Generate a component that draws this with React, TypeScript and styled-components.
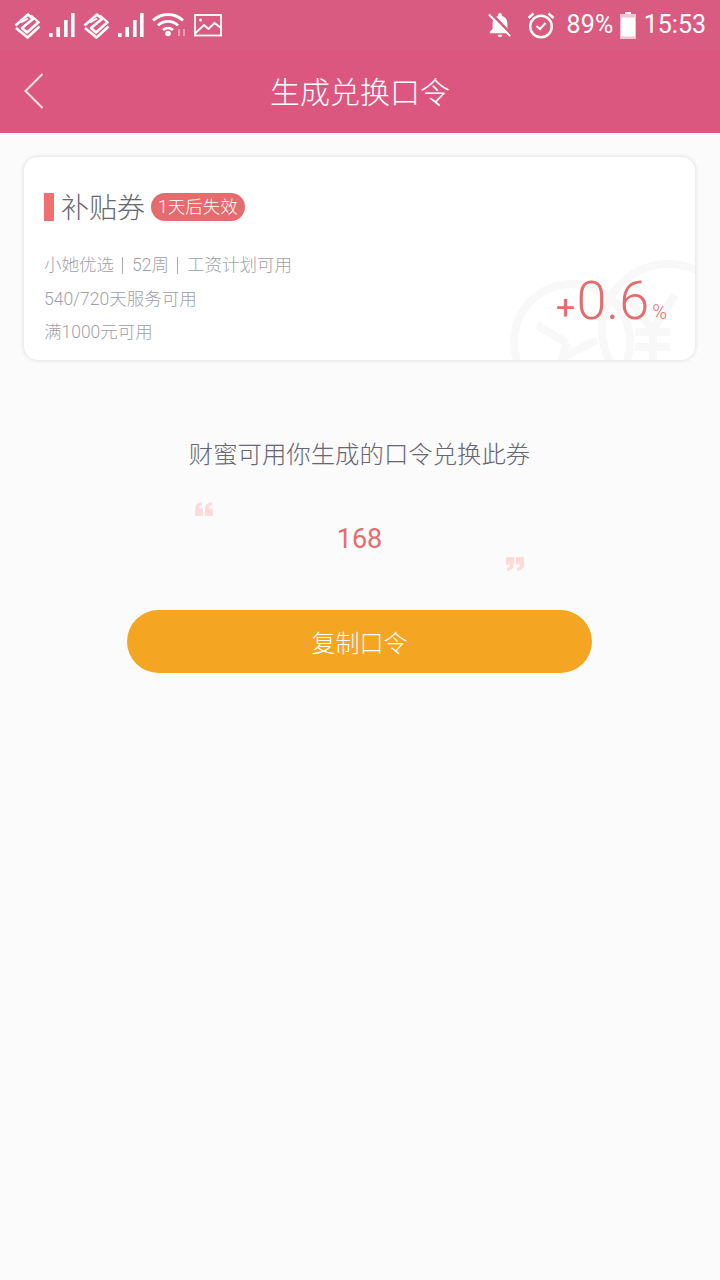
import React from 'react';
import styled, { createGlobalStyle } from 'styled-components';

const Global = createGlobalStyle`
  html, body { margin: 0; padding: 0; background: #fbfbfb; }
  body { font-family: Roboto, "Noto Sans CJK SC", sans-serif; }
`;

const Page = styled.div`
  width: 720px;
  height: 1280px;
  overflow: hidden;
  background: #fbfbfb;
  display: flex;
  flex-direction: column;
`;

const StatusBar = styled.div`
  height: 50px;
  box-sizing: border-box;
  padding: 0 14px;
  background: #d95b81;
  display: flex;
  align-items: center;
  justify-content: space-between;
  color: #fff;
`;

const StatusGroup = styled.div<{ $gap?: number }>`
  display: flex;
  align-items: center;
  gap: ${(p) => p.$gap ?? 0}px;
`;

const StatusSlot = styled.span<{ $left: number }>`
  display: flex;
  align-items: center;
  margin-left: ${(p) => p.$left}px;
`;

const StatusText = styled.span<{ $tight?: boolean }>`
  font-family: Roboto, sans-serif;
  font-size: 25px;
  line-height: 50px;
  letter-spacing: ${(p) => (p.$tight ? '0' : '0.3px')};
  color: #fff;
`;

const Header = styled.div`
  height: 83px;
  background: #dc5780;
  position: relative;
  display: flex;
  align-items: center;
  justify-content: center;
  padding-bottom: 4px;
  box-sizing: border-box;
`;

const BackButton = styled.div`
  position: absolute;
  left: 24px;
  top: 23px;
  line-height: 0;
`;

const Title = styled.h1`
  margin: 0;
  font: 300 30px "Noto Sans CJK SC", sans-serif;
  color: #fff;
`;

const Content = styled.div`
  padding: 24px 25px 0 24px;
  display: flex;
  flex-direction: column;
  align-items: stretch;
`;

const Card = styled.div`
  position: relative;
  overflow: hidden;
  height: 203px;
  box-sizing: border-box;
  padding: 36px 20px 0;
  background: #fff;
  border-radius: 14px;
  box-shadow: 0 0 5px rgba(0, 0, 0, 0.14);
`;

const Watermark = styled.svg`
  position: absolute;
  right: 0;
  bottom: 0;
`;

const CardHead = styled.div`
  display: flex;
  align-items: center;
  height: 28px;
`;

const Marker = styled.span`
  width: 10px;
  height: 28px;
  background: #ee7072;
  margin-right: 7px;
`;

const CardTitle = styled.span`
  position: relative;
  bottom: 1px;
  font: 300 28px/28px "Noto Sans CJK SC", sans-serif;
  color: #666674;
`;

const Badge = styled.span`
  margin-left: 6px;
  height: 28px;
  padding: 0 7px;
  border-radius: 14px;
  background: #e56c6e;
  color: #fff;
  font: 300 17.5px/28px Roboto, "Noto Sans CJK SC", sans-serif;
`;

const Meta = styled.div<{ $top: number }>`
  position: relative;
  margin-top: ${(p) => p.$top}px;
  font: 300 17.5px/24px Roboto, "Noto Sans CJK SC", sans-serif;
  color: #9f9fab;
  display: flex;
  align-items: center;
`;

const Sep = styled.span`
  width: 1px;
  height: 17px;
  background: #a9a9b3;
  margin: 0 9px 0 8px;
`;

const Rate = styled.div`
  position: absolute;
  right: 28px;
  bottom: 23px;
  display: flex;
  align-items: baseline;
  color: #e56c6e;
  font-family: Roboto, sans-serif;
`;

const RatePlus = styled.span`
  font-size: 34px;
  line-height: 50px;
  margin-right: 1px;
`;

const RateValue = styled.span`
  font-size: 54px;
  font-weight: 300;
  line-height: 50px;
`;

const RateUnit = styled.span`
  font-size: 20px;
  font-weight: 300;
  line-height: 50px;
  margin-left: 3px;
`;

const Hint = styled.p`
  margin: 76px 0 0;
  text-align: center;
  font: 300 24.4px/34px "Noto Sans CJK SC", sans-serif;
  color: #666674;
`;

const CodeBox = styled.div`
  position: relative;
  width: 329px;
  height: 68px;
  margin: 33px auto 0;
  padding-top: 3px;
  box-sizing: border-box;
  display: flex;
  align-items: center;
  justify-content: center;
  font: 400 27px/32px Roboto, sans-serif;
  color: #e56c6e;
`;

const Quote = styled.span<{ $end?: boolean }>`
  position: absolute;
  ${(p) => (p.$end ? 'right: 0; bottom: 0;' : 'left: 0; top: -1px;')}
  line-height: 0;
`;

const CopyButton = styled.button`
  display: block;
  width: 465px;
  height: 63px;
  margin: 39px auto 0;
  padding: 0;
  border: 0;
  border-radius: 32px;
  background: #f4a521;
  color: #fff;
  font: 300 24px "Noto Sans CJK SC", sans-serif;
`;

const CarrierIcon = () => (
  <svg width="27" height="27" viewBox="0 0 27 27" fill="none" stroke="#fff" strokeWidth="2.6" strokeLinejoin="round">
    <path d="M2 16 13.500 25.500 25.500 14.500" />
    <path d="M1.500 13.500 14 2.500 19 7 8 16 13 20.500 24 10.500" />
    <path d="M7 10.500 14 6.500" strokeWidth="2" />
    <path d="M17 3.500 25.500 11" strokeWidth="2" />
  </svg>
);

const SignalIcon = () => (
  <svg width="26" height="26" viewBox="0 0 26 26" fill="#fff">
    <rect x="0" y="21" width="3.6" height="4" />
    <rect x="7.4" y="15" width="3.6" height="10" />
    <rect x="15" y="8" width="3.6" height="17" />
    <rect x="22" y="1" width="3.6" height="24" />
  </svg>
);

const WifiIcon = () => (
  <svg width="34" height="26" viewBox="0 0 34 26" fill="none" stroke="#fff" strokeWidth="2.8">
    <path d="M1 8.500C9.500 .5 22.500 .5 31 8.500" />
    <path d="M6 13.500C12 8 20 8 26 13.500" />
    <path d="M11 18C14 15.500 18 15.500 21 18" />
    <circle cx="16" cy="21.500" r="2.800" fill="#fff" stroke="none" />
    <path d="M27 17v7M32 17v7" stroke="#f0a8bd" strokeWidth="1.600" />
  </svg>
);

const ImageIcon = () => (
  <svg width="28" height="23" viewBox="0 0 28 23" fill="none" stroke="#fff" strokeWidth="1.800">
    <rect x="1" y="1" width="26" height="20.500" />
    <circle cx="6.500" cy="6" r="1.500" fill="#fff" stroke="none" />
    <path d="M1.500 19 10 11 14.500 15 20.500 9 27 14" />
  </svg>
);

const BellOffIcon = () => (
  <svg width="24" height="27" viewBox="0 0 26 27" fill="#fff">
    <path d="M13 0c1.300 0 2 1 2 2v1.200c3.800 1 6 4.300 6 8v6l3 3V22H2v-1.800l3-3v-6c0-3.700 2.200-7 6-8V2c0-1 .7-2 2-2Z" />
    <path d="M10.500 23.500h5a2.500 2.500 0 0 1-5 0Z" />
    <path d="M3.500 0.500 26 24" stroke="#d95b81" strokeWidth="3" fill="none" />
    <path d="M1 1.500 24 25" stroke="#fff" strokeWidth="2.200" fill="none" />
  </svg>
);

const AlarmIcon = () => (
  <svg width="28" height="28" viewBox="0 0 28 28" fill="none" stroke="#fff" strokeWidth="2.400">
    <circle cx="14" cy="15.500" r="10.800" />
    <path d="M9.500 15 13 18 18.500 12" strokeWidth="2" />
    <path d="M1.500 7 6.500 2.500M26.500 7 21.500 2.500" />
  </svg>
);

const BatteryIcon = () => (
  <svg width="16" height="27" viewBox="0 0 16 27" fill="#fff">
    <rect x="5" y="0" width="6" height="2" />
    <path d="M0 2h16v25H0Z" fill="#f2c3d2" />
    <rect x="1" y="5.500" width="14" height="19" />
  </svg>
);

const BackIcon = () => (
  <svg width="20" height="36" viewBox="0 0 20 36" fill="none" stroke="#fbe4eb" strokeWidth="2">
    <path d="M18.500 1 1.500 18 18.500 35" />
  </svg>
);

const QuoteOpen = () => (
  <svg width="18" height="14" viewBox="0 0 18 14" fill="#ffdada">
    <path d="M0 14V7C0 3.500 2 1 7 0v3C4.500 3.500 4 4.500 4 6.500h4V14ZM10 14V7c0-3.500 2-6 7-7v3c-2.500.5-3 1.500-3 3.500h4V14Z" />
  </svg>
);

const QuoteClose = () => (
  <svg width="18" height="14" viewBox="0 0 18 14" fill="#ffdada">
    <path d="M18 0v7c0 3.500-2 6-7 7v-3c2.500-.5 3-1.500 3-3.500h-4V0ZM8 0v7c0 3.500-2 6-7 7v-3c2.500-.5 3-1.500 3-3.500H0V0Z" />
  </svg>
);

export default function App() {
  return (
    <Page>
      <Global />
      <StatusBar>
        <StatusGroup $gap={8}>
          <CarrierIcon />
          <SignalIcon />
          <CarrierIcon />
          <SignalIcon />
          <WifiIcon />
          <ImageIcon />
        </StatusGroup>
        <StatusGroup>
          <StatusSlot $left={0}>
            <BellOffIcon />
          </StatusSlot>
          <StatusSlot $left={15}>
            <AlarmIcon />
          </StatusSlot>
          <StatusSlot $left={11}>
            <StatusText>89%</StatusText>
          </StatusSlot>
          <StatusSlot $left={6}>
            <BatteryIcon />
          </StatusSlot>
          <StatusSlot $left={8}>
            <StatusText $tight>15:53</StatusText>
          </StatusSlot>
        </StatusGroup>
      </StatusBar>
      <Header>
        <BackButton>
          <BackIcon />
        </BackButton>
        <Title>生成兑换口令</Title>
      </Header>
      <Content>
        <Card>
          <Watermark width="190" height="105" viewBox="0 0 190 105" fill="none" stroke="#f8f8f8" strokeWidth="8">
            <circle cx="67" cy="87" r="58" />
            <circle cx="163" cy="75" r="66" />
            <path d="M32 70 62 88M58 102 92 85M62 88 56 105" />
            <path d="M125 45 148 75 170 40M148 75v30M130 77h35M130 92h35" />
          </Watermark>
          <CardHead>
            <Marker />
            <CardTitle>补贴券</CardTitle>
            <Badge>1天后失效</Badge>
          </CardHead>
          <Meta $top={32}>
            小她优选<Sep />52周<Sep />工资计划可用
          </Meta>
          <Meta $top={10}>540/720天服务可用</Meta>
          <Meta $top={9}>满1000元可用</Meta>
          <Rate>
            <RatePlus>+</RatePlus>
            <RateValue>0.6</RateValue>
            <RateUnit>%</RateUnit>
          </Rate>
        </Card>
        <Hint>财蜜可用你生成的口令兑换此券</Hint>
        <CodeBox>
          <Quote>
            <QuoteOpen />
          </Quote>
          168
          <Quote $end>
            <QuoteClose />
          </Quote>
        </CodeBox>
        <CopyButton>复制口令</CopyButton>
      </Content>
    </Page>
  );
}
